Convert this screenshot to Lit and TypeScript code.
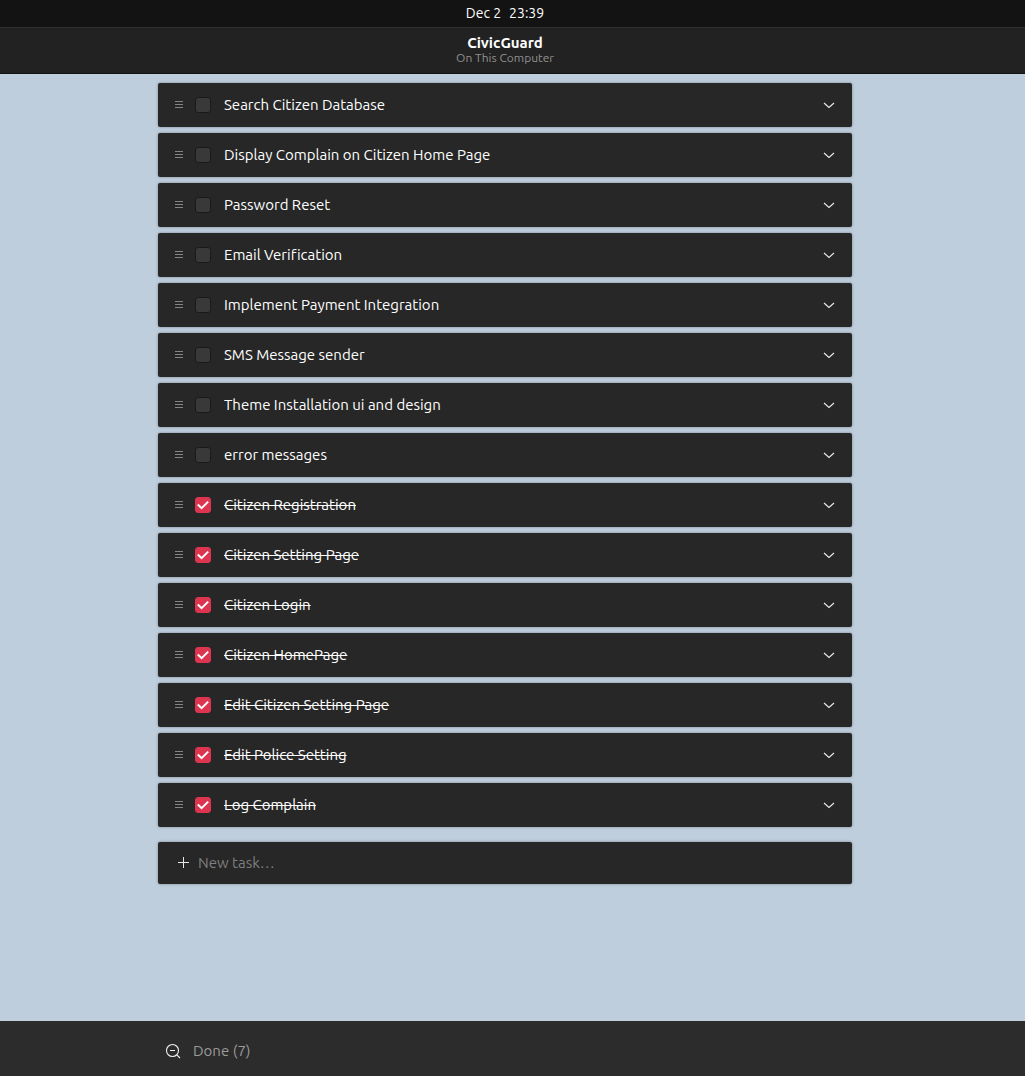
import { LitElement, html, css, svg } from "lit";
import { customElement, property, state } from "lit/decorators.js";
import { classMap } from "lit/directives/class-map.js";

interface Task {
  title: string;
  done: boolean;
}

const chevronIcon = html`<svg class="chevron" viewBox="0 0 16 16" aria-hidden="true">
  ${svg`<path d="M3 6 L8 10.4 L13 6" />`}
</svg>`;

const handleIcon = html`<svg class="handle" viewBox="0 0 8 8" aria-hidden="true">
  ${svg`<path d="M0 0.5 H8 M0 3.5 H8 M0 6.5 H8" />`}
</svg>`;

@customElement("task-row")
export class TaskRow extends LitElement {
  @property({ attribute: false }) task: Task = { title: "", done: false };
  @property() uid = "task";

  static styles = css`
    :host {
      display: block;
    }
    .row {
      display: flex;
      align-items: center;
      box-sizing: border-box;
      height: 44px;
      padding: 0 15px 0 17px;
      background: #272727;
      border-radius: 2px;
      box-shadow: 0 0 3px rgba(0, 0, 0, 0.35);
    }
    .handle {
      width: 8px;
      height: 8px;
      flex: none;
      margin-right: 12px;
      fill: none;
      stroke: #858585;
      stroke-width: 1;
    }
    .box {
      appearance: none;
      display: grid;
      place-items: center;
      box-sizing: border-box;
      flex: none;
      width: 16px;
      height: 16px;
      margin: 0 13px 0 0;
      border: 1px solid #1a1a1a;
      border-radius: 3px;
      background: #393939;
    }
    .check-wrap {
      display: grid;
      flex: none;
    }
    .check-wrap > * {
      grid-area: 1 / 1;
    }
    .box:checked {
      background: #dd3450;
      border-color: #dd3450;
    }
    .tick {
      width: 16px;
      height: 16px;
      fill: none;
      stroke: #ffffff;
      stroke-width: 2;
      pointer-events: none;
      visibility: hidden;
    }
    .box:checked + .tick {
      visibility: visible;
    }
    .title {
      flex: 1;
      color: #ffffff;
      font-size: 15px;
      line-height: 20px;
      font-variant-ligatures: none;
    }
    .title.done {
      text-decoration: line-through;
      text-decoration-thickness: 1px;
    }
    .expand {
      display: flex;
      flex: none;
      margin: 0;
      padding: 0;
      border: 0;
      background: none;
    }
    .chevron {
      width: 16px;
      height: 16px;
      fill: none;
      stroke: #ececec;
      stroke-width: 1.1;
    }
  `;

  private toggle(event: Event) {
    const done = (event.target as HTMLInputElement).checked;
    this.dispatchEvent(new CustomEvent("task-toggle", { detail: done }));
  }

  render() {
    const { title, done } = this.task;
    return html`<div class="row">
      ${handleIcon}
      <span class="check-wrap">
        <input class="box" type="checkbox" id=${this.uid} .checked=${done} @change=${this.toggle} />
        <svg class="tick" viewBox="0 0 16 16" aria-hidden="true">
          <path d="M2.8 7.5 L6.6 11.2 L13.2 4.6" />
        </svg>
      </span>
      <label class=${classMap({ title: true, done })} for=${this.uid}>${title}</label>
      <button class="expand" type="button" aria-label="Details">${chevronIcon}</button>
    </div>`;
  }
}

@customElement("app-root")
export class AppRoot extends LitElement {
  @state() private tasks: Task[] = [
    { title: "Search Citizen Database", done: false },
    { title: "Display Complain on Citizen Home Page", done: false },
    { title: "Password Reset", done: false },
    { title: "Email Verification", done: false },
    { title: "Implement Payment Integration", done: false },
    { title: "SMS Message sender", done: false },
    { title: "Theme Installation ui and design", done: false },
    { title: "error messages", done: false },
    { title: "Citizen Registration", done: true },
    { title: "Citizen Setting Page", done: true },
    { title: "Citizen Login", done: true },
    { title: "Citizen HomePage", done: true },
    { title: "Edit Citizen Setting Page", done: true },
    { title: "Edit Police Setting", done: true },
    { title: "Log Complain", done: true },
  ];

  static styles = css`
    :host {
      display: flex;
      flex-direction: column;
      min-height: 100vh;
      background: #bfcedd;
      color: #ffffff;
      font-family: Ubuntu, "Noto Sans", "Open Sans", sans-serif;
      font-size: 15px;
      line-height: 20px;
    }
    .topbar,
    .header,
    .main,
    .footer {
      box-sizing: border-box;
      padding-right: 15px;
    }
    .topbar {
      display: flex;
      justify-content: center;
      gap: 8px;
      height: 27px;
      padding-top: 3px;
      background: #131313;
      font-size: 14px;
    }
    .header {
      display: flex;
      flex-direction: column;
      align-items: center;
      height: 47px;
      padding-top: 6px;
      border-top: 1px solid #303030;
      border-bottom: 1px solid #121212;
      background: #222222;
    }
    .name {
      margin: 0;
      font-size: 15px;
      font-weight: 700;
      line-height: 17px;
      color: #ffffff;
    }
    .place {
      margin: 0;
      font-size: 12px;
      line-height: 14px;
      color: #919191;
    }
    .main {
      flex: 1;
      padding-top: 9px;
      padding-bottom: 24px;
    }
    .column {
      box-sizing: border-box;
      width: 100%;
      max-width: 694px;
      margin: 0 auto;
    }
    .list {
      display: flex;
      flex-direction: column;
      gap: 6px;
      margin: 0 0 15px;
      padding: 0;
      list-style: none;
    }
    .new-task {
      display: flex;
      align-items: center;
      gap: 8px;
      height: 42px;
      box-sizing: border-box;
      margin: 0;
      padding: 0 20px;
      background: #272727;
      border-radius: 2px;
      box-shadow: 0 0 3px rgba(0, 0, 0, 0.35);
    }
    .plus {
      width: 12px;
      height: 12px;
      flex: none;
      fill: none;
      stroke: #e6e6e6;
      stroke-width: 1;
    }
    .entry {
      flex: 1;
      min-width: 0;
      margin: 0;
      padding: 0;
      border: 0;
      outline: 0;
      background: none;
      color: inherit;
      font: inherit;
    }
    .entry::placeholder {
      color: #7e7e7e;
      opacity: 1;
    }
    .footer {
      display: flex;
      align-items: center;
      height: 55px;
      padding-top: 5px;
      background: #2c2c2c;
    }
    .filter {
      display: flex;
      align-items: center;
      gap: 12px;
      margin: 0;
      padding: 0 7px;
      border: 0;
      background: none;
      color: #9b9b9b;
      font: inherit;
    }
    .lens {
      width: 16px;
      height: 16px;
      flex: none;
      fill: none;
      stroke: #f0f0f0;
      stroke-width: 1.1;
    }
  `;

  private setDone(index: number, done: boolean) {
    this.tasks = this.tasks.map((task, i) => (i === index ? { ...task, done } : task));
  }

  private addTask(event: Event) {
    event.preventDefault();
    const form = event.target as HTMLFormElement;
    const entry = form.elements.namedItem("title") as HTMLInputElement;
    const title = entry.value.trim();
    if (title) this.tasks = [...this.tasks, { title, done: false }];
    form.reset();
  }

  render() {
    const doneCount = this.tasks.filter((task) => task.done).length;
    return html`
      <div class="topbar"><span>Dec 2</span><span>23:39</span></div>
      <header class="header">
        <h1 class="name">CivicGuard</h1>
        <p class="place">On This Computer</p>
      </header>
      <main class="main">
        <div class="column">
          <ul class="list">
            ${this.tasks.map(
              (task, i) => html`<li>
                <task-row
                  .task=${task}
                  .uid=${`task-${i}`}
                  @task-toggle=${(e: CustomEvent<boolean>) => this.setDone(i, e.detail)}
                ></task-row>
              </li>`
            )}
          </ul>
          <form class="new-task" @submit=${this.addTask}>
            <svg class="plus" viewBox="0 0 12 12" aria-hidden="true">
              <path d="M0 5.5 H11 M5.5 0 V11" />
            </svg>
            <input class="entry" name="title" type="text" placeholder="New task…" aria-label="New task" />
          </form>
        </div>
      </main>
      <footer class="footer">
        <div class="column">
          <button class="filter" type="button">
            <svg class="lens" viewBox="0 0 16 16" aria-hidden="true">
              <circle cx="7.5" cy="7.5" r="6" />
              <path d="M5 7.5 H10 M11.8 11.8 L15 15" />
            </svg>
            <span>Done (${doneCount})</span>
          </button>
        </div>
      </footer>
    `;
  }
}
